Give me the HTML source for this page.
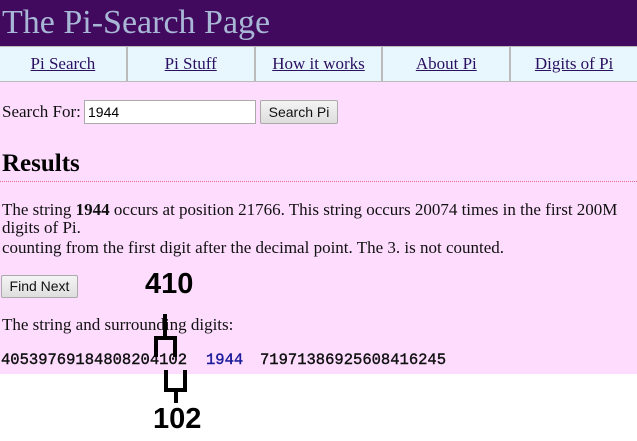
<!DOCTYPE html>
<html><head><style>
body{margin:0;width:637px;height:441px;background:#fff;position:relative;font-family:"Liberation Serif","Times New Roman",serif;overflow:hidden}
#pink{position:absolute;left:0;top:0;width:637px;height:374px;background:#fddcfd}
#hdr{position:absolute;left:0;top:0;width:637px;height:46px;background:#420a5e;color:#a9b7d6;font-size:34px;line-height:46px;padding-left:2px;box-sizing:border-box}
#nav{position:absolute;left:0;top:46px;width:637px;height:36px;background:#e8f6fd;display:flex;border-top:1px solid #bbb;border-bottom:1px solid #bbb;box-sizing:border-box}
#nav div{flex:1;text-align:center;line-height:34px;font-size:17px;border-right:2px solid #bbb}
#nav div:last-child{border-right:none}
#nav a{color:#2a1060;text-decoration:underline}
.t{position:absolute;left:2px;font-size:17px;color:#111;white-space:nowrap}
input{position:absolute;left:84px;top:100px;width:172px;height:24px;box-sizing:border-box;border:1px solid #aaa;background:#fff;font:14px "Liberation Sans",sans-serif;padding:2px 3px}
.btn{position:absolute;box-sizing:border-box;border:1px solid #aaa;background:linear-gradient(#f4f4f4,#dedede);font:14px "Liberation Sans",sans-serif;color:#111;text-align:center;border-radius:2px}
h2{position:absolute;left:2px;top:150px;margin:0;font-size:25px;font-weight:bold}
#line{position:absolute;left:0;top:181px;width:637px;border-top:1px dotted #e07090}
.m{position:absolute;top:351px;font:15.5px "Liberation Mono",monospace;white-space:pre;-webkit-text-stroke:0.4px}
.lab{position:absolute;font:bold 29px "Liberation Sans",sans-serif;color:#000}
.k{position:absolute;background:#000}
</style></head><body>
<div id="pink"></div>
<div id="hdr">The Pi-Search Page</div>
<div id="nav"><div><a>Pi Search</a></div><div><a>Pi Stuff</a></div><div><a>How it works</a></div><div><a>About Pi</a></div><div><a>Digits of Pi</a></div></div>
<div class="t" style="top:102px">Search For:</div>
<input value="1944">
<div class="btn" style="left:260px;top:100px;width:78px;height:24px;line-height:22px">Search Pi</div>
<h2>Results</h2>
<div id="line"></div>
<div class="t" style="top:200px">The string <b>1944</b> occurs at position 21766. This string occurs 20074 times in the first 200M</div>
<div class="t" style="top:218px">digits of Pi.</div>
<div class="t" style="top:238px">counting from the first digit after the decimal point. The 3. is not counted.</div>
<div class="btn" style="left:1px;top:275px;width:77px;height:23px;line-height:21px">Find Next</div>
<div class="t" style="top:315px">The string and surrounding digits:</div>
<div class="m" style="left:1px;color:#111">40539769184808204102</div>
<div class="m" style="left:206px;color:#1a1a9a">1944</div>
<div class="m" style="left:260px;color:#111">71971386925608416245</div>
<div class="lab" style="left:145px;top:268px">410</div>
<div class="lab" style="left:153px;top:403px">102</div>
<div class="k" style="left:163px;top:314px;width:4px;height:24px"></div>
<div class="k" style="left:154px;top:336px;width:23px;height:4px"></div>
<div class="k" style="left:154px;top:336px;width:4px;height:21px"></div>
<div class="k" style="left:173px;top:336px;width:4px;height:21px"></div>
<div class="k" style="left:164px;top:370px;width:4px;height:22px"></div>
<div class="k" style="left:183px;top:370px;width:4px;height:22px"></div>
<div class="k" style="left:164px;top:388px;width:23px;height:4px"></div>
<div class="k" style="left:174px;top:388px;width:4px;height:15px"></div>
</body></html>
